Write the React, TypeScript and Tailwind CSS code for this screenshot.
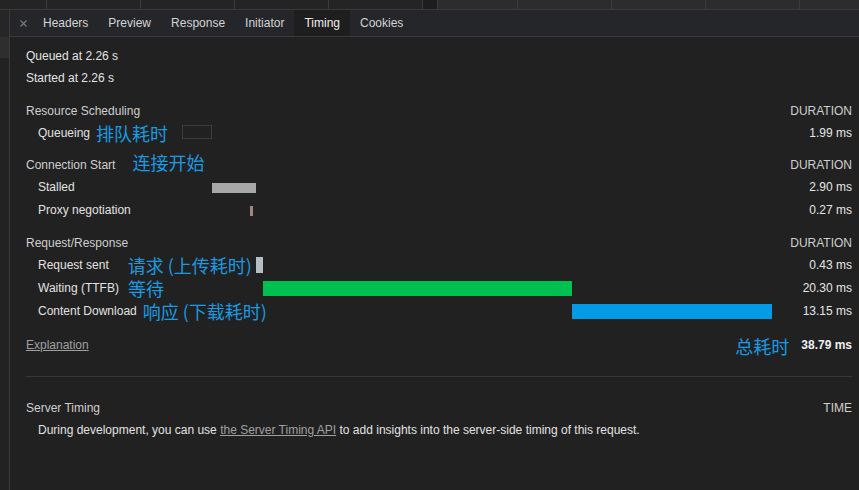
import React from 'react';

type Bar = { left: number; width: number; top: number; height: number; color?: string; outline?: boolean };
type Row = { label: string; note?: string; noteGap?: number; bar: Bar; value: string };

const noteCls = "text-[18px] leading-none text-[#1a9ae0] font-['Noto_Sans_CJK_SC','Noto_Sans',sans-serif] whitespace-nowrap";

const sections: { title: string; note?: string; rows: Row[]; mt: string }[] = [
    {
        title: 'Resource Scheduling',
        mt: 'mt-[12px]',
        rows: [
            { label: 'Queueing', note: '排队耗时', noteGap: 6, bar: { left: 0, width: 30, top: 4, height: 14, outline: true }, value: '1.99 ms' },
        ],
    },
    {
        title: 'Connection Start',
        note: '连接开始',
        mt: 'mt-[11px]',
        rows: [
            { label: 'Stalled', bar: { left: 30, width: 44, top: 8, height: 10, color: '#a8a8a8' }, value: '2.90 ms' },
            { label: 'Proxy negotiation', bar: { left: 68, width: 3, top: 8, height: 10, color: '#a3877f' }, value: '0.27 ms' },
        ],
    },
    {
        title: 'Request/Response',
        mt: 'mt-[12px]',
        rows: [
            { label: 'Request sent', note: '请求 (上传耗时)', noteGap: 19, bar: { left: 74, width: 7, top: 4, height: 16, color: '#b4bec3' }, value: '0.43 ms' },
            { label: 'Waiting (TTFB)', note: '等待', noteGap: 9, bar: { left: 81, width: 309, top: 5, height: 15, color: '#00c050' }, value: '20.30 ms' },
            { label: 'Content Download', note: '响应 (下载耗时)', noteGap: 6, bar: { left: 390, width: 200, top: 5, height: 15, color: '#039be5' }, value: '13.15 ms' },
        ],
    },
];

const topCells = [47, 94, 94, 94, 94, 15, 80, 94, 94, 94];

const tabs = ['Headers', 'Preview', 'Response', 'Initiator', 'Timing', 'Cookies'];

const TimingRow = ({ row }: { row: Row }) => (
    <div className="flex h-[23px] items-center">
        <div className="w-[156px] shrink-0 pl-[12px] flex items-center whitespace-nowrap text-[#e2e2e2]">
            <span>{row.label}</span>
            {row.note && (
                <span className={noteCls} style={{ marginLeft: row.noteGap }}>{row.note}</span>
            )}
        </div>
        <div className="relative w-[590px] h-full shrink-0">
            <div
                className={`absolute ${row.bar.outline ? 'border border-[#3c3c3c]' : ''}`}
                style={{
                    left: row.bar.left,
                    width: row.bar.width,
                    top: row.bar.top,
                    height: row.bar.height,
                    backgroundColor: row.bar.color,
                }}
            />
        </div>
        <div className="flex-1 text-right text-[#e6e6e6]">{row.value}</div>
    </div>
);

export default function App() {
    return (
        <div className="w-[859px] h-[490px] overflow-hidden bg-[#212121] font-['Liberation_Sans',Arial,sans-serif] text-[12px] flex flex-col">
            {/* request table header strip */}
            <div className="flex h-[10px] shrink-0 border-b border-[#3a3a3a] bg-[#2c2c2c]">
                {topCells.map((w, i) => (
                    <div
                        key={i}
                        className={`h-full border-r border-[#3b3b3b] ${i < 5 ? 'bg-[#242424]' : i === 5 ? 'bg-[#1d1d1d]' : ''}`}
                        style={{ width: w }}
                    />
                ))}
            </div>

            <div className="flex flex-1 min-h-0">
                <div className="w-[10px] shrink-0 border-r border-[#3a3a3a] bg-[#222222] flex flex-col">
                    <div className="h-[27px] bg-[#262626]" />
                    <div className="h-[21px] bg-[#2e2e2e]" />
                </div>

                <div className="flex-1 flex flex-col">
                    {/* tabs */}
                    <div className="flex h-[27px] shrink-0 items-stretch border-b border-[#3a3a3a] bg-[#25262a]">
                        <div className="w-[23px] flex items-center justify-center pl-[3px]">
                            <svg width="7" height="7" viewBox="0 0 7 7">
                                <path d="M0.5 0.5 L6.5 6.5 M6.5 0.5 L0.5 6.5" stroke="#7c7c7c" strokeWidth="1.1" />
                            </svg>
                        </div>
                        {tabs.map((t) => (
                            <div
                                key={t}
                                className={`px-[10px] flex items-center ${t === 'Timing' ? 'bg-[#1e1e1e] text-[#eeeeee]' : 'text-[#d4d4d4]'}`}
                            >
                                {t}
                            </div>
                        ))}
                    </div>

                    <div className="pl-[16px] pr-[7px] pt-[8px]">
                        <div className="h-[22px] flex items-center text-[#e4e4e4]">Queued at 2.26 s</div>
                        <div className="h-[22px] flex items-center text-[#e4e4e4]">Started at 2.26 s</div>

                        {sections.map((s) => (
                            <div key={s.title} className={s.mt}>
                                <div className="h-[20px] flex items-center justify-between text-[#cfcfcf]">
                                    <div className="flex items-center">
                                        <span>{s.title}</span>
                                        {s.note && (
                                            <span className={`${noteCls} ml-[17px] -translate-y-[3px]`}>{s.note}</span>
                                        )}
                                    </div>
                                    <span>DURATION</span>
                                </div>
                                {s.rows.map((r) => (
                                    <TimingRow key={r.label} row={r} />
                                ))}
                            </div>
                        ))}

                        <div className="mt-[12px] h-[21px] flex items-center">
                            <span className="text-[#a0a0a0] underline">Explanation</span>
                            <span className="flex-1" />
                            <span className={`${noteCls} mr-[12px] translate-y-[1px]`}>总耗时</span>
                            <span className="font-bold text-[#eeeeee]">38.79 ms</span>
                        </div>

                        <div className="mt-[21px] border-t border-[#383838]" />

                        <div className="mt-[21px] h-[20px] flex items-center justify-between text-[#cfcfcf]">
                            <span>Server Timing</span>
                            <span>TIME</span>
                        </div>
                        <div className="h-[23px] pl-[12px] flex items-center text-[#e2e2e2]">
                            <span>
                                During development, you can use{' '}
                                <span className="text-[#a0a0a0] underline">the Server Timing API</span>
                                {' '}to add insights into the server-side timing of this request.
                            </span>
                        </div>
                    </div>
                </div>
            </div>
        </div>
    );
}
